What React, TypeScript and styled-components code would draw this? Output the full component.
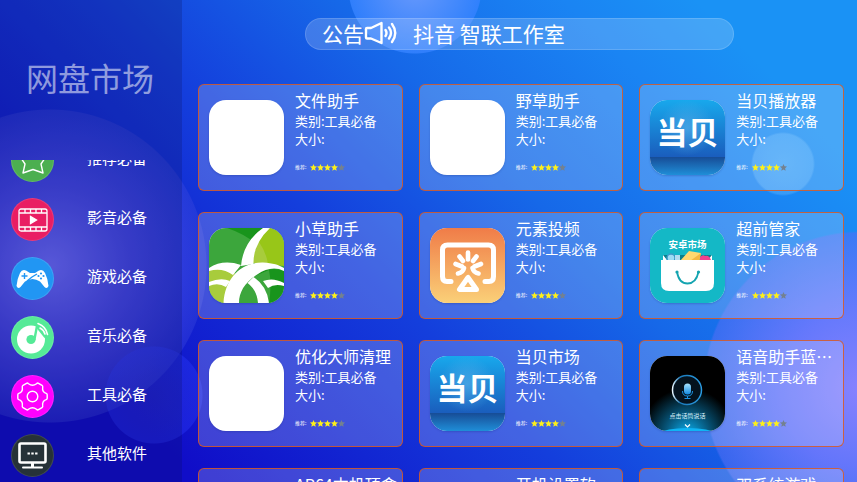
import React from "react";
import styled, { createGlobalStyle } from "styled-components";

const GlobalStyle = createGlobalStyle`
  * { box-sizing: border-box; }
  body {
    margin: 0;
    overflow: hidden;
    font-family: "Noto Sans CJK SC", "Noto Sans", sans-serif;
    color: #fff;
  }
  button {
    font: inherit;
    color: inherit;
    background: none;
    border: 0;
    padding: 0;
    text-align: left;
    cursor: pointer;
  }
  h1, h2, p, ul { margin: 0; padding: 0; font-weight: 400; list-style: none; }
`;

const Page = styled.div`
  display: grid;
  grid-template-columns: 182px minmax(0, 1fr);
  height: 100vh;
  overflow: hidden;
  background:
    radial-gradient(circle at 154px 395px, rgba(70, 80, 235, 0.26) 0, rgba(46, 62, 255, 0.36) 48px, transparent 49px),
    radial-gradient(circle at 50px 266px, rgba(112, 112, 255, 0.95) 0, rgba(82, 84, 238, 0.78) 78px, rgba(60, 72, 220, 0.38) 156px, transparent 157px),
    radial-gradient(circle at 783px 164px, rgba(120, 200, 255, 0.42) 0, rgba(110, 190, 255, 0.36) 30px, transparent 32px),
    radial-gradient(circle at 415px -13px, rgba(118, 160, 255, 0.85) 0, rgba(52, 130, 255, 0.85) 66px, transparent 67px),
    radial-gradient(circle at 860px 388px, rgba(140, 130, 255, 0.95) 0, rgba(120, 120, 255, 0.8) 78px, rgba(84, 110, 245, 0.55) 155px, transparent 157px),
    linear-gradient(45deg, #100dc8 15%, #143edc 43%, #1668e8 61%, #1a84f3 78%, #1a92f5 88%);
`;

const Sidebar = styled.aside`
  display: flex;
  flex-direction: column;
  min-height: 0;
  background: rgba(8, 12, 70, 0.2);
`;

const Brand = styled.h1`
  flex: none;
  height: 160px;
  padding: 53px 0 0 26px;
  font-size: 32px;
  line-height: 48px;
  color: rgba(255, 255, 255, 0.55);
`;

const Nav = styled.nav`
  flex: 1;
  min-height: 0;
  display: flex;
  flex-direction: column;
  justify-content: flex-end;
  overflow: hidden;
  padding-bottom: 5px;
`;

const NavList = styled.ul`
  display: grid;
  gap: 16px;
`;

const NavButton = styled.button`
  display: flex;
  align-items: center;
  gap: 33px;
  width: 100%;
  padding-left: 11px;
`;

const NavIcon = styled.span<{ $color: string }>`
  display: flex;
  align-items: center;
  justify-content: center;
  width: 43px;
  height: 43px;
  border-radius: 50%;
  background: ${(p) => p.$color};
  border: 1px solid rgba(255, 255, 255, 0.12);
`;

const NavLabel = styled.span`
  font-size: 15px;
  line-height: 22px;
  padding-bottom: 6px;
`;

const Main = styled.main`
  min-width: 0;
  overflow: hidden;
`;

const Notice = styled.header`
  display: flex;
  align-items: center;
  height: 32px;
  margin: 18px 123px 34px;
  padding: 0 16px 2px;
  border-radius: 16px;
  border: 1px solid rgba(255, 255, 255, 0.15);
  background: rgba(255, 255, 255, 0.18);
  font-size: 21px;
  line-height: 32px;
  white-space: nowrap;
`;

const NoticeText = styled.p`
  margin-left: 15px;
`;

const CardGrid = styled.ul`
  display: grid;
  grid-template-columns: repeat(3, minmax(0, 1fr));
  gap: 21px 16px;
  padding: 0 13px 0 16px;
`;

const CardButton = styled.button`
  display: flex;
  gap: 11px;
  width: 100%;
  height: 107px;
  padding: 4px 4px 0 10px;
  border: 1px solid rgba(214, 88, 34, 0.85);
  border-radius: 6px;
  background: rgba(255, 255, 255, 0.2);
`;

const AppIcon = styled.span`
  flex: none;
  width: 75px;
  height: 75px;
  margin-top: 11px;
  border-radius: 17px;
  overflow: hidden;
  background: #fff;
  box-shadow: 0 1px 2px rgba(20, 40, 120, 0.25);

  svg { display: block; }
`;

const CardBody = styled.span`
  display: flex;
  flex-direction: column;
  min-width: 0;
`;

const AppName = styled.span`
  font-size: 16px;
  line-height: 23px;
  white-space: nowrap;
  overflow: hidden;
  text-overflow: ellipsis;
`;

const Meta = styled.span`
  font-size: 13px;
  line-height: 18px;
  white-space: nowrap;
`;

const Rating = styled.span`
  display: flex;
  align-items: center;
  gap: 4px;
  margin-top: 15px;
  font-size: 5px;
  line-height: 8px;
`;

const Stars = styled.span`
  display: flex;
`;

const StarGlyph = ({ filled }: { filled: boolean }) => (
  <svg width="7" height="7" viewBox="0 0 24 24" aria-hidden="true">
    <path
      d="M12 0l3.400 8 8.600.7-6.500 5.600 2 8.700L12 18.500l-7.500 4.500 2-8.700L0 8.700 8.600 8z"
      fill={filled ? "#fdf01a" : "#74818f"}
    />
  </svg>
);

const SpeakerIcon = () => (
  <svg width="34" height="24" viewBox="0 0 34 24" fill="none" stroke="#fff" strokeWidth="2.400" strokeLinecap="round" strokeLinejoin="round" aria-hidden="true">
    <path d="M3 7h4L17.500 2v20L7 17.500H3q-1 0-1-1V8q0-1 1-1z" />
    <path d="M21.500 9q2 3 0 6M25 6.500q4 5.500 0 11M28 3q6.500 9 0 18" />
  </svg>
);

const StarIcon = () => (
  <svg width="30" height="30" viewBox="0 0 30 30" fill="none" stroke="#fff" strokeWidth="1.400" strokeLinejoin="round">
    <path d="M15 3l4 7.500 8 1.500-4 6 2 9L15 23.500 5 27l2-9-4-6 8-1.500z" />
  </svg>
);

const FilmIcon = () => (
  <svg width="30" height="24" viewBox="0 0 30 24" fill="none" stroke="#fff" strokeWidth="1.300">
    <rect x="1" y="1" width="28" height="22" rx="2" />
    <path d="M1 5h28M1 19h28M7 1v4M12.500 1v4M18 1v4M23.500 1v4M7 19v4M12.500 19v4M18 19v4M23.500 19v4" />
    <path d="M12.500 8.500v7l6-3.500z" fill="#fff" />
  </svg>
);

const GamepadIcon = () => (
  <svg width="33" height="20" viewBox="0 0 33 20">
    <path
      d="M4 4Q6 0 10 1.500L14 4h5L23 1.500Q27 0 29 4 32 10 32.500 17 31 20.500 28.500 18L24 12.500Q16.500 7.500 9 12.500L4.500 18Q2 20.500 .500 17 1 10 4 4z"
      fill="#fff"
    />
    <path d="M8.500 4v6M5.500 7h6M11 12l5-4 5-3" stroke="#2196f3" strokeWidth="1.400" fill="none" />
    <g fill="#2196f3">
      <circle cx="25" cy="4.500" r="1.100" />
      <circle cx="25" cy="9.500" r="1.100" />
      <circle cx="22.500" cy="7" r="1.100" />
      <circle cx="27.500" cy="7" r="1.100" />
    </g>
  </svg>
);

const MusicIcon = () => (
  <svg width="33" height="33" viewBox="0 0 33 33" fill="none">
    <circle cx="15" cy="18.500" r="14" fill="#fff" />
    <path d="M21 2l-.5 5 8 10 4-3V2z" fill="#55ea97" />
    <circle cx="15" cy="18.500" r="4.600" fill="#55ea97" />
    <path d="M18.300 19L21 5" stroke="#55ea97" strokeWidth="2.400" />
    <path d="M22 2.500q8 3 9.500 11M24 7q4 2 5 6" stroke="#fff" strokeWidth="1.600" strokeLinecap="round" />
  </svg>
);

const GearIcon = () => (
  <svg width="31" height="31" viewBox="0 0 31 31" fill="none" stroke="#fff" strokeWidth="1.400" strokeLinejoin="round">
    <circle cx="15.500" cy="15.500" r="5.300" />
    <path d="M9.500 2.300q1-.6 2 .4 4 3 8 0 1-1 2-.4l3.500 2q1 .7.700 2-.8 4.500 3.500 6 1 .4 1 1.400v3.600q0 1-1 1.400-4.300 1.500-3.500 6 .3 1.300-.7 2l-3.500 2q-1 .6-2-.4-4-3-8 0-1 1-2 .4l-3.500-2q-1-.7-.7-2 .8-4.500-3.500-6-1-.4-1-1.400v-3.600q0-1 1-1.400 4.300-1.500 3.500-6-.3-1.300.7-2z" />
  </svg>
);

const MonitorIcon = () => (
  <svg width="29" height="27" viewBox="0 0 29 27" fill="none" stroke="#fff">
    <rect x="1.500" y="1.500" width="26" height="19" rx="1.500" strokeWidth="2.600" />
    <path d="M14.500 21v4" strokeWidth="3" />
    <path d="M5 25.500h19" strokeWidth="2" strokeLinecap="round" />
    <path d="M9.500 11.500h2.400M13.300 11.500h2.400M17.100 11.500h2.400" strokeWidth="2.200" />
  </svg>
);

const DangbeiArt = () => (
  <svg width="75" height="75" viewBox="0 0 75 75" aria-hidden="true">
    <defs>
      <linearGradient id="dbTop" x1="0" y1="0" x2="0" y2="1">
        <stop offset="0" stopColor="#18a8ec" />
        <stop offset="1" stopColor="#1a5cbc" />
      </linearGradient>
      <linearGradient id="dbBase" x1="0" y1="0" x2="0" y2="1">
        <stop offset="0" stopColor="#174c96" />
        <stop offset="1" stopColor="#1f8ed8" />
      </linearGradient>
      <radialGradient id="dbGlow">
        <stop offset="0" stopColor="#60b4ec" stopOpacity="0.6" />
        <stop offset="1" stopColor="#60b4ec" stopOpacity="0" />
      </radialGradient>
    </defs>
    <rect width="75" height="58" fill="url(#dbTop)" />
    <circle cx="37" cy="28" r="28" fill="url(#dbGlow)" />
    <rect y="57" width="75" height="18" fill="url(#dbBase)" />
    <text x="37.500" y="44" textAnchor="middle" fontSize="31" fontWeight="700" fill="#fff">
      当贝
    </text>
  </svg>
);

const GrassArt = () => (
  <svg width="75" height="75" viewBox="0 0 75 75" aria-hidden="true">
    <rect width="75" height="75" fill="#3ca63c" />
    <path d="M18 0h40L34 37 62 40Q54 12 18 0z" fill="#18941c" />
    <path d="M60 0h15v38L44 35Q46 12 60 0z" fill="#98c618" />
    <path d="M50 14Q57 24 59 36L44 35Q44 22 50 14z" fill="#a8cc3c" />
    <path d="M0 42Q14 38 26 45L18 75H0z" fill="#a8cc3c" />
    <path d="M48 46Q62 38 75 43v32H60z" fill="#18941c" />
    <path d="M48 47l12-5q3 14 0 33h-4z" fill="#3ca63c" />
    <path d="M54 0h7Q44 16 44.500 36L32 38Q34 14 54 0z" fill="#fff" />
    <path d="M0 40Q14 31 32 37L24 47Q13 39 0 43zM0 54Q12 49 21 53L17 59Q9 54 0 58zM54 53Q64 49 75 55v3Q66 55 59 60z" fill="#fff" />
    <path d="M14.500 75C16 50 32 34 54 34.500 64 35 70 37 75 40V43C66 38 56 41 49 46 36 54 30 64 30 75z" fill="#fff" />
    <path d="M38.500 55l6-6Q58 58 60 75H49Q48 62 38.500 55z" fill="#fff" />
  </svg>
);

const CastArt = () => (
  <svg width="75" height="75" viewBox="0 0 75 75" fill="none" stroke="#fff" strokeLinecap="round" strokeLinejoin="round" aria-hidden="true">
    <defs>
      <linearGradient id="castBg" x1="0" y1="0" x2="0" y2="1">
        <stop offset="0" stopColor="#f07c48" />
        <stop offset="1" stopColor="#fad078" />
      </linearGradient>
    </defs>
    <rect width="75" height="75" fill="url(#castBg)" stroke="none" />
    <path d="M21 53.500h-4q-4.500 0-4.500-5V22q0-5 5-5h41q5 0 5 5v26.500q0 5-4.500 5h-4" strokeWidth="5" />
    <path d="M38 24.500v7M29.500 28.500l3.500 4.500M46.500 28.500L43 33M25.500 36l6.500 2.500M51 36l-6.500 2.500M28 45.500q5-1 6-5.500M48.500 45.500q-5-1-6-5.500" strokeWidth="4.600" />
    <path d="M38 49.500L29.500 61.500h17z" strokeWidth="5" />
  </svg>
);

const MarketArt = () => (
  <svg width="75" height="75" viewBox="0 0 75 75" aria-hidden="true">
    <rect width="75" height="75" fill="#14b8c6" />
    <text x="37.500" y="20" textAnchor="middle" fontSize="9.500" fontWeight="700" fill="#fff">
      安卓市场
    </text>
    <path d="M13 27h49v7H13z" fill="#087f8d" />
    <path d="M13 27l4 5h-4zM62 27l-4 5h4z" fill="#fff" />
    <circle cx="21" cy="30" r="4" fill="#9cdcf4" stroke="#3a9ac8" strokeWidth="1.500" />
    <path d="M25 27h5v6h-5z" fill="#b0dcf0" />
    <path d="M30 33l9-10 12 2-2 9z" fill="#ffd870" />
    <path d="M40 33l11-8-2 9h-9z" fill="#f5b842" />
    <path d="M50 33v-4q3-3 5-1 4-1 6 4v1z" fill="#f5408e" />
    <path d="M11 32h53v23q0 8-8 8H19q-8 0-8-8z" fill="#fff" />
    <path d="M27 44q2 11.500 10.500 11.500T48.500 44" fill="none" stroke="#14a4b0" strokeWidth="1.800" />
    <circle cx="27" cy="44" r="1.600" fill="#14a4b0" />
    <circle cx="48.500" cy="44" r="1.600" fill="#14a4b0" />
  </svg>
);

const VoiceArt = () => (
  <svg width="75" height="75" viewBox="0 0 75 75" aria-hidden="true">
    <defs>
      <radialGradient id="voiceGlow" cx="0.500" cy="1.050" r="0.620">
        <stop offset="0" stopColor="#0bb0f0" />
        <stop offset="0.450" stopColor="#075a80" />
        <stop offset="1" stopColor="#000" />
      </radialGradient>
      <linearGradient id="voiceRing" x1="0" y1="0" x2="1" y2="0">
        <stop offset="0" stopColor="#e8f6ff" />
        <stop offset="0.250" stopColor="#1a78b8" />
        <stop offset="1" stopColor="#2a9ae0" />
      </linearGradient>
      <linearGradient id="voiceMic" x1="0" y1="0" x2="0" y2="1">
        <stop offset="0" stopColor="#a8e4ff" />
        <stop offset="1" stopColor="#1088e0" />
      </linearGradient>
    </defs>
    <rect width="75" height="75" fill="url(#voiceGlow)" />
    <ellipse cx="37.500" cy="77" rx="26" ry="5" fill="#10b4f4" />
    <circle cx="37" cy="34" r="14.500" fill="#04121e" stroke="url(#voiceRing)" strokeWidth="1.500" />
    <rect x="34" y="27.500" width="7" height="11" rx="3.500" fill="url(#voiceMic)" />
    <path d="M32.500 35q0 5 5 5t5-5M37.500 40v2.500M34.500 42.500h6" fill="none" stroke="#1a90e0" strokeWidth="1" />
    <text x="37.500" y="62" textAnchor="middle" fontSize="6" fill="#d8eef8">
      点击话筒说话
    </text>
    <path d="M35 68.500l2.500 2.500 2.500-2.500" fill="none" stroke="#fff" strokeWidth="1.200" />
  </svg>
);

const categories = [
  { label: "推荐必备", color: "#4caf50", Icon: StarIcon },
  { label: "影音必备", color: "#e91e63", Icon: FilmIcon },
  { label: "游戏必备", color: "#2196f3", Icon: GamepadIcon },
  { label: "音乐必备", color: "#55ea97", Icon: MusicIcon },
  { label: "工具必备", color: "#ff00ff", Icon: GearIcon },
  { label: "其他软件", color: "#263238", Icon: MonitorIcon },
];

const apps: { name: string; Art?: () => React.ReactElement }[] = [
  { name: "文件助手" },
  { name: "野草助手" },
  { name: "当贝播放器", Art: DangbeiArt },
  { name: "小草助手", Art: GrassArt },
  { name: "元素投频", Art: CastArt },
  { name: "超前管家", Art: MarketArt },
  { name: "优化大师清理" },
  { name: "当贝市场", Art: DangbeiArt },
  { name: "语音助手蓝牙版", Art: VoiceArt },
  { name: "AR64本机顶盒" },
  { name: "开机设置软" },
  { name: "双系统游戏" },
];

const AppCard = ({ name, Art }: { name: string; Art?: () => React.ReactElement }) => (
  <CardButton type="button">
    <AppIcon>{Art && <Art />}</AppIcon>
    <CardBody>
      <AppName>{name}</AppName>
      <Meta>类别:工具必备</Meta>
      <Meta>大小:</Meta>
      <Rating>
        <span>推荐:</span>
        <Stars role="img" aria-label="4/5">
          {[1, 2, 3, 4, 5].map((n) => (
            <StarGlyph key={n} filled={n <= 4} />
          ))}
        </Stars>
      </Rating>
    </CardBody>
  </CardButton>
);

export default function App() {
  return (
    <>
      <GlobalStyle />
      <Page>
        <Sidebar>
          <Brand>网盘市场</Brand>
          <Nav>
            <NavList>
              {categories.map(({ label, color, Icon }) => (
                <li key={label}>
                  <NavButton type="button">
                    <NavIcon $color={color}>
                      <Icon />
                    </NavIcon>
                    <NavLabel>{label}</NavLabel>
                  </NavButton>
                </li>
              ))}
            </NavList>
          </Nav>
        </Sidebar>
        <Main>
          <Notice>
            <span>公告</span>
            <SpeakerIcon />
            <NoticeText>抖音 智联工作室</NoticeText>
          </Notice>
          <CardGrid>
            {apps.map((app) => (
              <li key={app.name}>
                <AppCard {...app} />
              </li>
            ))}
          </CardGrid>
        </Main>
      </Page>
    </>
  );
}
